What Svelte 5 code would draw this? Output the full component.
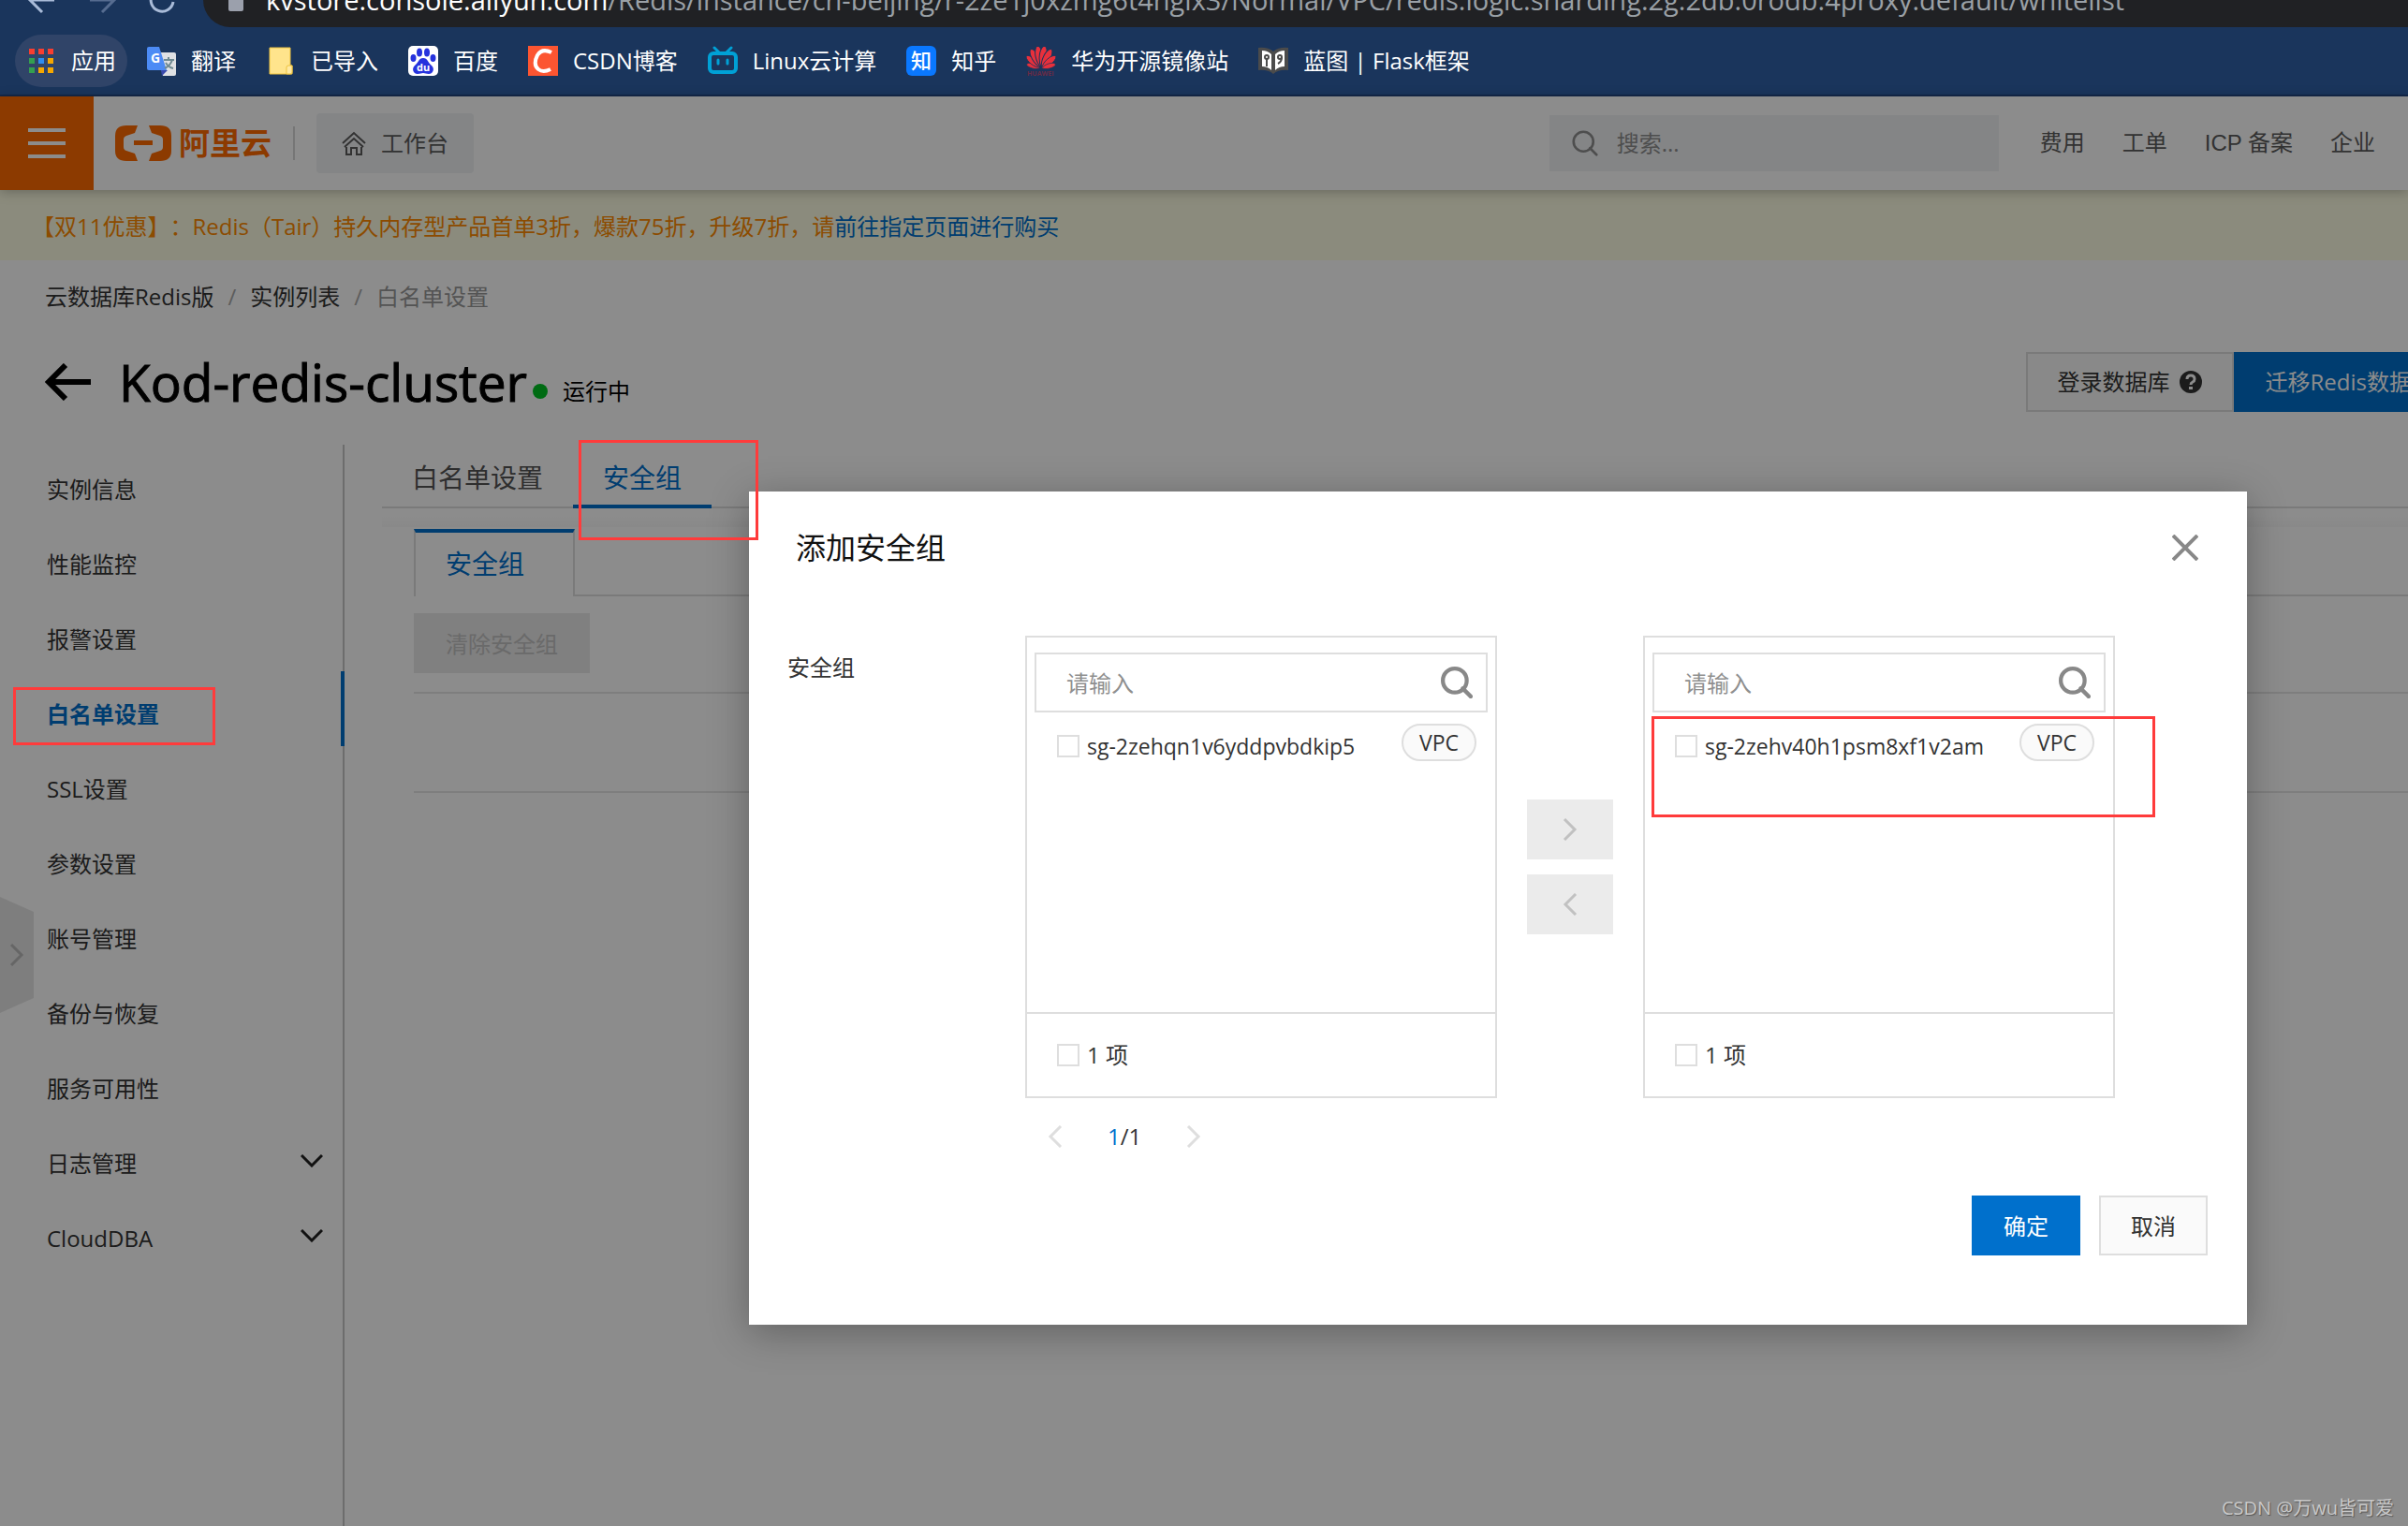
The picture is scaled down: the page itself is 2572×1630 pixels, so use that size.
<script lang="ts">
    type Bookmark = { icon: string; name: string };
    type MenuItem = { name: string; active?: boolean; expandable?: boolean };
    type Group = { id: string; type: string };

    const bookmarks: Bookmark[] = [
        { icon: 'apps', name: '应用' },
        { icon: 'translate', name: '翻译' },
        { icon: 'folder', name: '已导入' },
        { icon: 'baidu', name: '百度' },
        { icon: 'csdn', name: 'CSDN博客' },
        { icon: 'bili', name: 'Linux云计算' },
        { icon: 'zhihu', name: '知乎' },
        { icon: 'huawei', name: '华为开源镜像站' },
        { icon: 'flask', name: '蓝图 | Flask框架' },
    ];

    const appColors = ['#f93e30', '#f93e30', '#f93e30', '#34a04f', '#2d8cf0', '#f5a700', '#34a04f', '#f5a700', '#f5a700'];
    const petals = [
        { angle: -74, scale: 0.66 },
        { angle: -50, scale: 0.84 },
        { angle: -28, scale: 0.96 },
        { angle: -9, scale: 1 },
        { angle: 9, scale: 1 },
        { angle: 28, scale: 0.96 },
        { angle: 50, scale: 0.84 },
        { angle: 74, scale: 0.66 },
    ];

    const topLinks = ['费用', '工单', 'ICP 备案', '企业'];

    const menu: MenuItem[] = [
        { name: '实例信息' },
        { name: '性能监控' },
        { name: '报警设置' },
        { name: '白名单设置', active: true },
        { name: 'SSL设置' },
        { name: '参数设置' },
        { name: '账号管理' },
        { name: '备份与恢复' },
        { name: '服务可用性' },
        { name: '日志管理', expandable: true },
        { name: 'CloudDBA', expandable: true },
    ];

    const available: Group[] = [{ id: 'sg-2zehqn1v6yddpvbdkip5', type: 'VPC' }];
    const selected: Group[] = [{ id: 'sg-2zehv40h1psm8xf1v2am', type: 'VPC' }];
</script>

{#snippet chevron(dir: string)}
    <svg class="chevron" width="16" height="24" viewBox="0 0 16 24" fill="none" stroke="currentColor" stroke-width="3">
        <path d={dir === 'left' ? 'M14 1 3 12l11 11' : 'M2 1l11 11L2 23'} />
    </svg>
{/snippet}

{#snippet bookmarkIcon(icon: string)}
    <svg width="32" height="32" viewBox="0 0 32 32">
        {#if icon === 'apps'}
            {#each appColors as color, i}
                <rect x={3 + (i % 3) * 10} y={3 + Math.floor(i / 3) * 10} width="6" height="6" fill={color} />
            {/each}
        {:else if icon === 'translate'}
            <path d="M12 7h18q2 0 2 2v21q0 2-2 2H18z" fill="#dfe1e4" />
            <path d="M16 26h7l-6 6z" fill="#3949ab" />
            <path d="M3 1h11l8 25H3q-2 0-2-2V3q0-2 2-2z" fill="#4c8bf5" />
            <text x="5" y="18" font-size="14" font-weight="700" fill="#fff">G</text>
            <path d="M19 15h11M24 12v3M28 15q-2 6-8 9M21 18q3 5 8 6" stroke="#6f8a92" stroke-width="2" fill="none" />
        {:else if icon === 'folder'}
            <path d="M4 2h22v19h2v9H4z" fill="#ffe48c" stroke="#eec33e" stroke-width="1" />
            <path d="M22 30v-7q0-2 2-2h4v7q0 2-2 2z" fill="#ffe9a3" stroke="#eec33e" stroke-width="1" />
        {:else if icon === 'baidu'}
            <rect width="32" height="32" rx="5" fill="#fff" />
            <g fill="#2632dd">
                <ellipse cx="5.5" cy="13" rx="3" ry="4" />
                <ellipse cx="12" cy="7" rx="3" ry="4.5" />
                <ellipse cx="20" cy="7" rx="3" ry="4.5" />
                <ellipse cx="26.5" cy="13" rx="3" ry="4" />
                <path d="M16 13c5 0 5 5 9 8 4 4 1 9-3 9-3 0-4-1-6-1s-3 1-6 1c-4 0-7-5-3-9 4-3 4-8 9-8z" />
            </g>
            <text x="9" y="27" font-size="11" font-weight="700" fill="#fff">du</text>
        {:else if icon === 'csdn'}
            <rect width="32" height="32" fill="#fc5531" />
            <path d="M25 7Q15 2 10 10q-5 10 1 15 5 4 13 0" fill="none" stroke="#fff" stroke-width="4" />
        {:else if icon === 'bili'}
            <path d="M7 2l6 6M25 2l-6 6" stroke="#00a1d6" stroke-width="3" stroke-linecap="round" />
            <rect x="2" y="8" width="28" height="20" rx="4" fill="none" stroke="#00a1d6" stroke-width="4" />
            <path d="M11 15v4M21 15v4" stroke="#00a1d6" stroke-width="3" stroke-linecap="round" />
        {:else if icon === 'zhihu'}
            <rect width="32" height="32" rx="6" fill="#0a78ff" />
            <text x="5" y="24" font-size="22" font-weight="500" fill="#fff">知</text>
        {:else if icon === 'huawei'}
            {#each petals as petal}
                <path
                    d="M0-1C-5-8-5-20-1-24h2C5-20 5-8 0-1z"
                    fill="#e8303c"
                    stroke="#1a355c"
                    transform="translate(16 24) rotate({petal.angle}) scale({petal.scale})"
                />
            {/each}
            <text x="1" y="32" font-size="7" font-weight="700" fill="#6b2b45">HUAWEI</text>
        {:else}
            <path d="M0 2q10-1 16 4 6-5 16-4v24q-10-1-16 4-6-5-16-4z" fill="#4b4b4b" />
            <path d="M4 5q6 0 10 4v17q-4-4-10-4zM28 5q-6 0-10 4v17q4-4 10-4z" fill="#fff" />
            <circle cx="9" cy="12" r="2" fill="none" stroke="#4b4b4b" stroke-width="2" />
            <path d="M9 14v8M25 12q0 5-4 7" stroke="#4b4b4b" stroke-width="2" fill="none" />
            <circle cx="23" cy="12" r="2" fill="none" stroke="#4b4b4b" stroke-width="2" />
        {/if}
    </svg>
{/snippet}

{#snippet searchIcon(size: number, weight: number)}
    <svg width={size} height={size} viewBox="0 0 32 32" fill="none" stroke="currentColor" stroke-width={weight}>
        <circle cx="14" cy="14" r="12" />
        <path d="M22 22l8 8" stroke-linecap="round" />
    </svg>
{/snippet}

{#snippet panel(name: string, groups: Group[])}
    <div class="panel">
        <div class="panel-search">
            <input type="text" placeholder="请输入" aria-label="搜索{name}安全组" />
            <button aria-label="搜索">{@render searchIcon(34, 4)}</button>
        </div>
        <ul class="panel-list">
            {#each groups as group (group.id)}
                <li>
                    <label><input type="checkbox" />{group.id}</label>
                    <span class="tag">{group.type}</span>
                </li>
            {/each}
        </ul>
        <div class="panel-footer">
            <label><input type="checkbox" />{groups.length} 项</label>
        </div>
    </div>
{/snippet}

<div class="window">
    <div class="browser">
        <div class="address-row">
            <div class="nav-icons">
                <svg width="32" height="32" viewBox="0 0 32 32" fill="none" stroke="#a9bbd8" stroke-width="3"><path d="M29 16H4M16 3 3 16l13 13" /></svg>
                <svg width="32" height="32" viewBox="0 0 32 32" fill="none" stroke="#566c90" stroke-width="3"><path d="M3 16h25M16 3l13 13-13 13" /></svg>
                <svg width="32" height="32" viewBox="0 0 32 32" fill="none" stroke="#a9bbd8" stroke-width="3"><path d="M28 18A12 12 0 1 1 24 7" /></svg>
            </div>
            <div class="address">
                <svg width="16" height="24" viewBox="0 0 16 24"><rect y="6" width="16" height="18" rx="2" fill="#9ba0ac" /></svg>
                <span class="url"><b>kvstore.console.aliyun.com</b>/Redis/instance/cn-beijing/r-2ze1j0xzmg6t4nglx3/Normal/VPC/redis.logic.sharding.2g.2db.0rodb.4proxy.default/whitelist</span>
            </div>
        </div>
        <nav class="bookmarks">
            {#each bookmarks as bookmark}
                <a href="#{bookmark.icon}" class:hovered={bookmark.icon === 'apps'}>
                    {@render bookmarkIcon(bookmark.icon)}
                    {bookmark.name}
                </a>
            {/each}
        </nav>
    </div>

    <div class="console">
        <header class="topbar">
            <button class="hamburger" aria-label="菜单"><i></i><i></i><i></i></button>
            <a class="logo" href="#home">
                <svg width="60" height="38" viewBox="0 0 60 38" fill="#ff6a00">
                    <path d="M24 0H12Q0 0 0 11v16q0 11 12 11h12l-3-8-9-3q-3-1-3-4v-8q0-3 3-4l9-3z" />
                    <path d="M36 0h12q12 0 12 11v16q0 11-12 11H36l3-8 9-3q3-1 3-4v-8q0-3-3-4l-9-3z" />
                    <rect x="20" y="16" width="20" height="5" />
                </svg>
                阿里云
            </a>
            <span class="divider"></span>
            <button class="workbench">
                <svg width="26" height="26" viewBox="0 0 26 26" fill="none" stroke="currentColor" stroke-width="2">
                    <path d="M1 13 13 2l12 11M5 17v8h5v-7h6v7h5v-8M3 17l10-9 10 9" />
                </svg>
                工作台
            </button>
            <div class="search">
                {@render searchIcon(28, 3)}
                <input type="text" placeholder="搜索..." aria-label="搜索" />
            </div>
            <nav class="top-links">
                {#each topLinks as link}
                    <a href="#top">{link}</a>
                {/each}
            </nav>
        </header>

        <div class="banner">【双11优惠】：Redis（Tair）持久内存型产品首单3折，爆款75折，升级7折，请<a href="#buy">前往指定页面进行购买</a></div>

        <nav class="breadcrumb">
            <a href="#redis">云数据库Redis版</a>
            <i>/</i>
            <a href="#list">实例列表</a>
            <i>/</i>
            <span>白名单设置</span>
        </nav>

        <div class="title-row">
            <button class="back" aria-label="返回">
                <svg width="50" height="40" viewBox="0 0 50 40" fill="none" stroke="#000" stroke-width="6"><path d="M49 20H5M22 2 4 20l18 18" /></svg>
            </button>
            <h1>Kod-redis-cluster</h1>
            <span class="status">运行中</span>
            <div class="actions">
                <button class="login">
                    登录数据库
                    <svg width="24" height="24" viewBox="0 0 24 24">
                        <circle cx="12" cy="12" r="12" fill="#333" />
                        <path d="M8 9q0-4 4-4t4 4q0 2-2 3t-2 3" fill="none" stroke="#fff" stroke-width="3" />
                        <rect x="10" y="17" width="4" height="3" fill="#fff" />
                    </svg>
                </button>
                <button class="migrate">迁移Redis数据</button>
            </div>
        </div>

        <div class="content">
            <aside class="sidebar">
                {#each menu as item}
                    <a href="#menu" class:active={item.active}>
                        {item.name}
                        {#if item.expandable}
                            <svg width="24" height="14" viewBox="0 0 24 14" fill="none" stroke="#222" stroke-width="3"><path d="M1 1l11 11L23 1" /></svg>
                        {/if}
                    </a>
                {/each}
            </aside>

            <main>
                <div class="tabs">
                    <button>白名单设置</button>
                    <button class="active">安全组</button>
                </div>
                <div class="strip"></div>
                <section>
                    <div class="card-tabs"><button>安全组</button></div>
                    <button class="clear" disabled>清除安全组</button>
                    <div class="blank-row"></div>
                </section>
            </main>
        </div>

        <button class="drawer-handle" aria-label="展开">{@render chevron('right')}</button>

        <div class="mask">
            <div class="modal" role="dialog" aria-labelledby="modal-title">
                <div class="modal-header">
                    <h2 id="modal-title">添加安全组</h2>
                    <button class="close" aria-label="关闭">
                        <svg width="28" height="28" viewBox="0 0 28 28" stroke="#888" stroke-width="4"><path d="M1 1l26 26M27 1 1 27" /></svg>
                    </button>
                </div>
                <div class="modal-body">
                    <div class="field-label">安全组</div>
                    <div class="transfer">
                        {@render panel('可选', available)}
                        <div class="moves">
                            <button disabled aria-label="添加">{@render chevron('right')}</button>
                            <button disabled aria-label="移除">{@render chevron('left')}</button>
                        </div>
                        {@render panel('已选', selected)}
                        <div class="pager">
                            <button disabled aria-label="上一页">{@render chevron('left')}</button>
                            <span><em>1</em>/1</span>
                            <button disabled aria-label="下一页">{@render chevron('right')}</button>
                        </div>
                    </div>
                </div>
                <div class="modal-footer">
                    <button class="primary">确定</button>
                    <button>取消</button>
                </div>
            </div>
        </div>
    </div>

    <div class="mark mark-menu"></div>
    <div class="mark mark-tab"></div>
    <div class="mark mark-group"></div>
    <div class="watermark">CSDN @万wu皆可爱</div>
</div>

<style>
    :global(body) {
        margin: 0;
    }

    .window {
        position: relative;
        display: flex;
        flex-direction: column;
        min-height: 100vh;
        overflow: hidden;
        font-family: "Open Sans", "Noto Sans CJK SC", sans-serif;
        font-size: 24px;
        line-height: 32px;
        color: #333;
    }

    .window *,
    .window *::after {
        box-sizing: border-box;
    }

    a {
        color: inherit;
        text-decoration: none;
    }

    button,
    input {
        margin: 0;
        padding: 0;
        border: 0;
        background: none;
        font: inherit;
        color: inherit;
    }

    svg {
        display: block;
        flex-shrink: 0;
    }

    i,
    em {
        font-style: normal;
    }

    /* browser chrome */
    .browser {
        background: #1a355c;
        color: #fff;
        border-bottom: 2px solid #14284a;
    }

    .address-row {
        display: flex;
        align-items: center;
        height: 58px;
        margin-top: -29px;
    }

    .nav-icons {
        display: flex;
        gap: 32px;
        width: 217px;
        padding-left: 29px;
        flex-shrink: 0;
    }

    .address {
        flex: 1;
        display: flex;
        align-items: center;
        gap: 24px;
        height: 58px;
        padding-left: 27px;
        background: #202124;
        border-radius: 29px 0 0 29px;
        white-space: nowrap;
    }

    .url {
        font-size: 29px;
        color: #9aa0a6;
    }

    .url b {
        font-weight: 400;
        color: #fff;
    }

    .bookmarks {
        display: flex;
        align-items: center;
        gap: 8px;
        height: 72px;
        padding: 0 16px;
    }

    .bookmarks a {
        display: flex;
        align-items: center;
        gap: 16px;
        height: 56px;
        padding: 0 12px;
        border-radius: 28px;
        white-space: nowrap;
    }

    .bookmarks a.hovered {
        background: #304468;
    }

    /* console page */
    .console {
        position: relative;
        flex: 1;
        display: flex;
        flex-direction: column;
        background: #fff;
    }

    .topbar {
        position: relative;
        display: flex;
        align-items: center;
        height: 100px;
        padding-right: 35px;
        background: #fff;
        box-shadow: 0 2px 12px rgba(0, 0, 0, 0.25);
        color: #5c5c5c;
    }

    .hamburger {
        display: flex;
        flex-direction: column;
        align-items: center;
        justify-content: center;
        gap: 10px;
        width: 100px;
        height: 100px;
        background: #ff6a00;
    }

    .hamburger i {
        width: 40px;
        height: 4px;
        background: #fff;
    }

    .logo {
        display: flex;
        align-items: center;
        gap: 8px;
        margin-left: 23px;
        font-size: 33px;
        font-weight: 700;
        color: #ff6a00;
    }

    .divider {
        width: 2px;
        height: 36px;
        margin: 0 23px;
        background: #d8d8d8;
    }

    .workbench {
        display: flex;
        align-items: center;
        gap: 16px;
        height: 64px;
        padding: 0 27px;
        background: #f0f2f5;
        border-radius: 4px;
    }

    .search {
        display: flex;
        align-items: center;
        gap: 20px;
        width: 480px;
        height: 60px;
        margin-left: auto;
        padding-left: 24px;
        background: #f0f2f5;
        color: #8f8f8f;
    }

    .search input {
        flex: 1;
        min-width: 0;
    }

    input::placeholder {
        color: #8f8f8f;
        opacity: 1;
    }

    .top-links {
        display: flex;
        gap: 40px;
        margin-left: 44px;
        font-family: "Liberation Sans", "Noto Sans CJK SC", sans-serif;
        white-space: nowrap;
    }

    .banner {
        height: 75px;
        padding-left: 34px;
        line-height: 78px;
        background: #fdfde3;
        color: #ff8a00;
        text-spacing-trim: space-all;
    }

    .banner a {
        color: #0070cc;
    }

    .breadcrumb {
        display: flex;
        align-items: center;
        gap: 15px;
        height: 78px;
        padding-left: 48px;
    }

    .breadcrumb i {
        color: #aaa;
    }

    .breadcrumb span {
        color: #999;
    }

    .title-row {
        display: flex;
        align-items: center;
        height: 104px;
        padding-left: 48px;
        margin-bottom: 15px;
    }

    h1 {
        margin: 0 6px 0 29px;
        font-size: 55px;
        font-weight: 400;
        line-height: 64px;
        color: #000;
        -webkit-text-stroke: 1px #000;
    }

    .status {
        display: flex;
        align-items: center;
        gap: 16px;
        margin-top: 20px;
        color: #000;
    }

    .status::before {
        content: '';
        width: 16px;
        height: 16px;
        border-radius: 50%;
        background: #00c424;
    }

    .actions {
        display: flex;
        margin: 0 -4px 0 auto;
    }

    .actions button {
        display: flex;
        align-items: center;
        height: 64px;
        padding-left: 34px;
        white-space: nowrap;
    }

    .actions .login {
        gap: 10px;
        padding: 0 32px;
        border: 2px solid #dedede;
        background: #fafafa;
    }

    .actions .migrate {
        background: #0070cc;
        color: #fff;
    }

    .content {
        flex: 1;
        display: flex;
    }

    .sidebar {
        width: 368px;
        flex-shrink: 0;
        padding-top: 2px;
        border-right: 2px solid #c6c6c6;
    }

    .sidebar a {
        display: flex;
        justify-content: space-between;
        align-items: center;
        height: 80px;
        margin-right: -2px;
        padding: 12px 19px 0 50px;
        border-right: 4px solid transparent;
    }

    .sidebar a.active {
        border-right-color: #0070cc;
        font-weight: 700;
        color: #0070cc;
    }

    .sidebar svg {
        margin-bottom: 6px;
    }

    .drawer-handle {
        position: absolute;
        left: 0;
        top: 855px;
        width: 36px;
        height: 124px;
        padding-left: 10px;
        background: #e6e6e6;
        clip-path: polygon(0 0, 100% 13%, 100% 87%, 0 100%);
        color: #bbb;
    }

    main {
        flex: 1;
        padding-left: 40px;
        font-size: 28px;
    }

    .tabs {
        display: flex;
        height: 68px;
        border-bottom: 2px solid #dedede;
    }

    .tabs button {
        height: 68px;
        padding: 2px 32px 0;
        color: #555;
    }

    .tabs .active {
        border-bottom: 4px solid #0070cc;
        padding-top: 6px;
        color: #0070cc;
    }

    .strip {
        height: 20px;
        background: linear-gradient(#fff 40%, #f9f9f9);
    }

    section {
        padding: 2px 0 0 34px;
    }

    .card-tabs {
        display: flex;
        height: 72px;
    }

    .card-tabs::after {
        content: '';
        flex: 1;
        border-bottom: 2px solid #dedede;
    }

    .card-tabs button {
        padding: 0 52px 2px 32px;
        border: 2px solid #dedede;
        border-top: 4px solid #0070cc;
        border-bottom: 0;
        color: #0070cc;
    }

    .clear {
        height: 64px;
        margin: 18px 0 20px;
        padding: 2px 34px 0;
        background: #e9e9e9;
        font-size: 24px;
        color: #c1c1c1;
    }

    .blank-row {
        height: 108px;
        border: solid #e6e6e6;
        border-width: 2px 0;
    }

    /* dialog */
    .mask {
        position: absolute;
        inset: 0;
        display: flex;
        align-items: flex-start;
        padding: 422px 172px 0 800px;
        background: rgba(0, 0, 0, 0.45);
    }

    .modal {
        flex: 1;
        background: #fff;
        box-shadow: 0 8px 40px rgba(0, 0, 0, 0.3);
    }

    .modal-header {
        display: flex;
        align-items: center;
        justify-content: space-between;
        padding: 36px 52px 0 50px;
    }

    h2 {
        margin: 0;
        font-size: 32px;
        font-weight: 400;
        line-height: 48px;
        color: #111;
    }

    .modal-body {
        display: flex;
        padding: 70px 141px 0 41px;
    }

    .field-label {
        width: 254px;
        flex-shrink: 0;
        line-height: 68px;
    }

    .transfer {
        flex: 1;
        display: grid;
        grid-template-columns: 1fr 92px 1fr;
        column-gap: 32px;
    }

    .panel {
        border: 2px solid #dedede;
    }

    .panel-search {
        display: flex;
        align-items: center;
        height: 64px;
        margin: 16px 8px 0;
        padding: 0 14px 0 32px;
        border: 2px solid #dedede;
        color: #888;
    }

    .panel-search input {
        flex: 1;
        min-width: 0;
        padding-top: 2px;
    }

    .panel-list {
        height: 320px;
        margin: 0;
        padding: 12px 20px 0 32px;
        list-style: none;
        font-size: 23px;
    }

    .panel-list li {
        display: flex;
        justify-content: space-between;
        align-items: flex-start;
    }

    .panel label {
        display: flex;
        align-items: center;
        gap: 8px;
        height: 48px;
    }

    input[type='checkbox'] {
        appearance: none;
        width: 24px;
        height: 24px;
        border: 2px solid #dedede;
        background: #fff;
    }

    .tag {
        height: 40px;
        padding: 0 17px;
        border: 2px solid #dedede;
        border-radius: 20px;
        background: #fafafa;
        line-height: 36px;
    }

    .panel-footer {
        display: flex;
        align-items: center;
        height: 90px;
        padding-left: 32px;
        border-top: 2px solid #dedede;
    }

    .moves {
        display: flex;
        flex-direction: column;
        justify-content: center;
        gap: 16px;
    }

    .moves button {
        display: flex;
        align-items: center;
        justify-content: center;
        height: 64px;
        background: #ebebeb;
        color: #c1c1c1;
    }

    .pager {
        display: flex;
        align-items: center;
        gap: 48px;
        height: 82px;
        padding-left: 24px;
    }

    .pager button {
        color: #dedede;
    }

    .pager em {
        color: #0070cc;
    }

    .modal-footer {
        display: flex;
        justify-content: flex-end;
        gap: 20px;
        padding: 22px 42px 74px 0;
    }

    .modal-footer button {
        width: 116px;
        height: 64px;
        padding-top: 2px;
        border: 2px solid #dedede;
        background: #fafafa;
    }

    .modal-footer .primary {
        border-color: #0070cc;
        background: #0070cc;
        color: #fff;
    }

    /* annotations over the page */
    .mark {
        position: absolute;
        border: 3px solid #ff3b3b;
        pointer-events: none;
    }

    .mark-menu {
        left: 14px;
        top: 734px;
        width: 216px;
        height: 62px;
    }

    .mark-tab {
        left: 618px;
        top: 470px;
        width: 192px;
        height: 107px;
    }

    .mark-group {
        left: 1764px;
        top: 765px;
        width: 538px;
        height: 108px;
    }

    .watermark {
        position: absolute;
        right: 15px;
        bottom: 3px;
        font-size: 20px;
        color: #c8c8c8;
        text-shadow: 1px 1px 1px #555;
    }
</style>
